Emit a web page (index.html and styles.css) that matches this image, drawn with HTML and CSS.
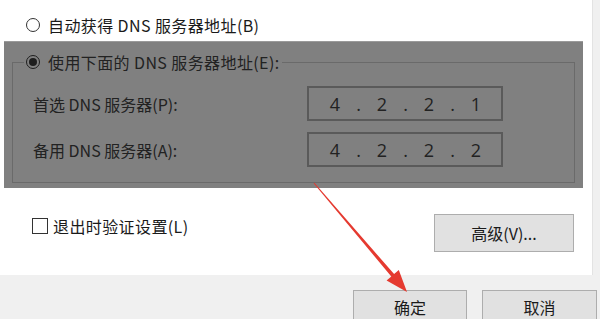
FILE: index.html
```html
<!DOCTYPE html>
<html lang="zh-CN">
<head>
<meta charset="utf-8">
<title>DNS</title>
<link rel="stylesheet" href="styles.css">
</head>
<body>
<div class="window">
  <div class="panel">
    <div class="opt opt-top">
      <span class="radio"></span>
      <span class="opt-text">自动获得 DNS 服务器地址(B)</span>
    </div>
    <div class="shade">
      <fieldset class="group">
        <legend class="legend">
          <span class="radio radio-on"><span class="dot"></span></span>
          <span class="opt-text">使用下面的 DNS 服务器地址(E):</span>
        </legend>
        <div class="field-row">
          <span class="field-label">首选 DNS 服务器(P):</span>
          <div class="ip">
            <span class="oct">4</span><span class="sep">.</span><span class="oct">2</span><span class="sep">.</span><span class="oct">2</span><span class="sep">.</span><span class="oct">1</span>
          </div>
        </div>
        <div class="field-row">
          <span class="field-label">备用 DNS 服务器(A):</span>
          <div class="ip">
            <span class="oct">4</span><span class="sep">.</span><span class="oct">2</span><span class="sep">.</span><span class="oct">2</span><span class="sep">.</span><span class="oct">2</span>
          </div>
        </div>
      </fieldset>
    </div>
    <div class="bottom-row">
      <div class="check-wrap">
        <span class="checkbox"></span>
        <span class="check-text">退出时验证设置(L)</span>
      </div>
      <button class="btn btn-adv">高级(V)...</button>
    </div>
  </div>
  <div class="footer">
    <button class="btn btn-foot">确定</button>
    <button class="btn btn-foot btn-cancel">取消</button>
  </div>
  <svg class="arrow" width="600" height="319" viewBox="0 0 600 319">
    <polygon points="313.6,183.3 391.3,276.5 386.6,280.5 407,292 398.8,270.1 394.1,274.1 314.4,182.7" fill="#e53a30"/>
  </svg>
</div>
</body>
</html>
```

FILE: styles.css
```css
* { box-sizing: border-box; }
html, body { margin: 0; padding: 0; }
body {
  width: 600px;
  height: 319px;
  overflow: hidden;
  background: #f0f0f0;
  font-family: "Noto Sans CJK SC", "Noto Sans", sans-serif;
  font-size: 16px;
  color: #1a1a1a;
}
.window {
  position: relative;
  width: 600px;
  height: 319px;
}
.panel {
  width: 593px;
  height: 275px;
  background: #fff;
  border-right: 1px solid #e3e3e3;
  padding-top: 15px;
}
.opt {
  display: flex;
  align-items: center;
  height: 20px;
  line-height: 20px;
}
.opt-top { padding-left: 26px; }
.radio {
  width: 14px;
  height: 14px;
  border: 1px solid #333;
  border-radius: 50%;
  background: #fff;
  display: inline-flex;
  align-items: center;
  justify-content: center;
  flex: none;
}
.opt-text { margin-left: 8px; white-space: nowrap; letter-spacing: 0.4px; }
.shade {
  margin-top: 6px;
  margin-left: 4px;
  width: 579px;
  height: 147px;
  background: #808080;
  border-top: 1px solid #9a9a9a;
  padding: 10px 8px 0 8px;
  color: #222;
}
.group {
  margin: 0;
  min-width: 0;
  border: 1px solid #6a6a6a;
  padding: 14px 0 15px 11px;
}
.legend {
  padding: 0 2px;
  display: flex;
  align-items: center;
  height: 20px;
  line-height: 20px;
}
.radio-on {
  background: #808080;
  border-color: #1e1e1e;
}
.dot {
  width: 8px;
  height: 8px;
  border-radius: 50%;
  background: #1e1e1e;
}
.field-row {
  display: flex;
  align-items: center;
  height: 35px;
  margin-left: 9px;
}
.field-row + .field-row { margin-top: 11px; }
.field-label {
  width: 274px;
  white-space: nowrap;
}
.ip {
  width: 196px;
  height: 35px;
  border: 2px solid #5a5a5a;
  display: flex;
  align-items: center;
  padding-left: 14px;
  font-family: "Open Sans", "Noto Sans", sans-serif;
  font-size: 18px;
  color: #222;
}
.oct { width: 24px; text-align: center; }
.sep { width: 23px; text-align: center; }
.bottom-row {
  display: flex;
  align-items: flex-start;
  margin-top: 26px;
  padding-left: 32px;
  padding-right: 18px;
}
.check-wrap {
  display: flex;
  align-items: center;
  margin-top: 3px;
  height: 17px;
}
.checkbox {
  width: 16px;
  height: 16px;
  border: 1px solid #333;
  background: #fff;
  flex: none;
}
.check-text { margin-left: 5px; white-space: nowrap; letter-spacing: 0.4px; }
.btn {
  font-family: "Noto Sans CJK SC", "Noto Sans", sans-serif;
  font-size: 16px;
  color: #1a1a1a;
  background: #e1e1e1;
  border: 1px solid #adadad;
  padding: 0;
  margin: 0;
}
.btn-adv {
  margin-left: auto;
  width: 140px;
  height: 38px;
}
.footer {
  display: flex;
  justify-content: flex-end;
  padding-top: 15px;
  padding-right: 3px;
  gap: 15px;
}
.btn-foot {
  width: 114px;
  height: 34px;
}
.btn-cancel { width: 115px; }
.arrow {
  position: absolute;
  left: 0;
  top: 0;
  pointer-events: none;
}
```
